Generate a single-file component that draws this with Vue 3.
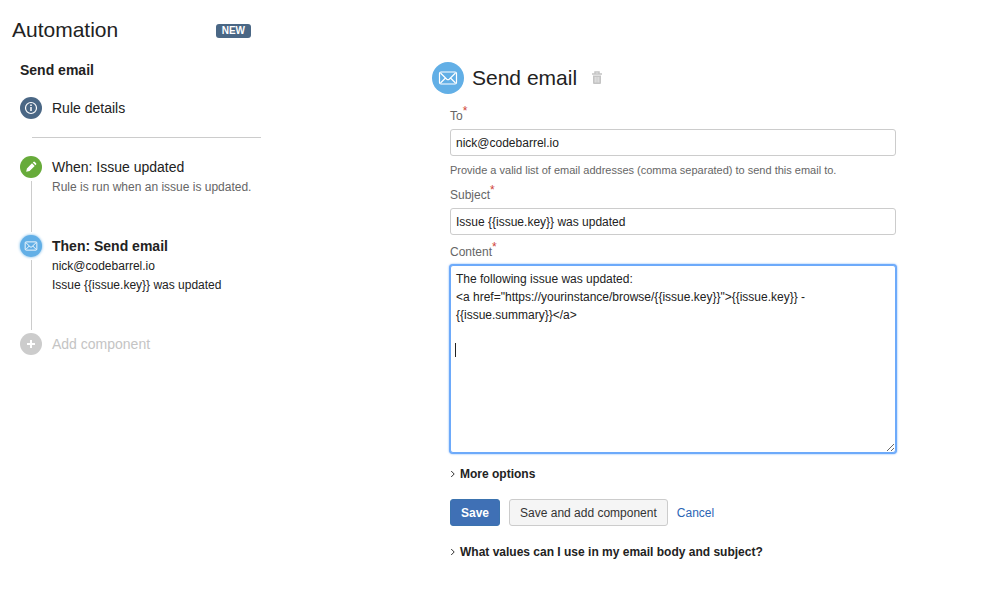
<template>
    <div class="page">
        <aside class="sidebar">
            <header class="sidebar-header">
                <h1>Automation</h1>
                <span class="badge">NEW</span>
            </header>
            <div class="rule">
                <h2>Send email</h2>
                <div class="details">
                    <span class="icon info">
                        <svg viewBox="0 0 22 22" fill="none" stroke="#fff">
                            <circle cx="11" cy="11" r="5.5" stroke-width="1.2" />
                            <path d="M11 10v4M11 7.6v1.3" stroke-width="1.5" />
                        </svg>
                    </span>
                    <span class="step-title">Rule details</span>
                </div>
                <hr />
                <ol class="steps">
                    <li v-for="step in steps" :key="step.title" class="step" :class="step.type">
                        <div class="rail">
                            <span class="icon">
                                <svg v-if="step.type === 'trigger'" viewBox="0 0 22 22" fill="#fff">
                                    <path d="M6.2 15.8l.7-3.4 5.1-5.1 2.7 2.7-5.1 5.1zM12.8 6.5l.6-.6q.7-.6 1.4 0l1.3 1.3q.6.7 0 1.4l-.6.6z" />
                                </svg>
                                <svg v-else-if="step.type === 'action'" viewBox="0 0 32 32" fill="none" stroke="#fff" stroke-width="1.3">
                                    <rect x="7.5" y="10" width="17" height="12" rx="1.5" />
                                    <path d="M8.5 11l6.3 6.2q1.2 1 2.4 0l6.3-6.2M8.5 21l5-5M23.5 21l-5-5" />
                                </svg>
                                <svg v-else viewBox="0 0 22 22" fill="none" stroke="#fff" stroke-width="2">
                                    <path d="M11 7v8M7 11h8" />
                                </svg>
                            </span>
                        </div>
                        <div class="step-body">
                            <span class="step-title">{{ step.title }}</span>
                            <p v-for="line in step.lines" :key="line">{{ line }}</p>
                        </div>
                    </li>
                </ol>
            </div>
        </aside>

        <main class="main">
            <header class="main-header">
                <span class="icon large">
                    <svg viewBox="0 0 32 32" fill="none" stroke="#fff" stroke-width="1.2">
                        <rect x="7.5" y="10" width="17" height="12" rx="1.5" />
                        <path d="M8.5 11l6.3 6.2q1.2 1 2.4 0l6.3-6.2M8.5 21l5-5M23.5 21l-5-5" />
                    </svg>
                </span>
                <h1>Send email</h1>
                <button type="button" class="trash" aria-label="Delete">
                    <svg viewBox="0 0 10 14" fill="none" stroke="#c4c4c4">
                        <path d="M0 3h10M3 2.5V1h4v1.5" stroke-width="1.5" />
                        <path d="M1 4.5h8V12q0 1-1 1H2q-1 0-1-1z" fill="#c4c4c4" stroke="none" />
                        <path d="M3.2 6v5.5M5 6v5.5M6.8 6v5.5" stroke="#fff" stroke-width=".6" />
                    </svg>
                </button>
            </header>

            <form class="form" @submit.prevent>
                <label for="to">To<sup>*</sup></label>
                <input id="to" v-model="to" type="text" />
                <p class="help">Provide a valid list of email addresses (comma separated) to send this email to.</p>

                <label for="subject">Subject<sup>*</sup></label>
                <input id="subject" v-model="subject" type="text" />

                <label for="content">Content<sup>*</sup></label>
                <div class="editor">
                    <textarea id="content" ref="contentBox" v-model="content" spellcheck="false"></textarea>
                    <span class="caret"></span>
                </div>

                <button type="button" class="expander">
                    <svg viewBox="0 0 6 8"><path d="M1.2 1l3 3-3 3" /></svg>More options
                </button>
                <div class="buttons">
                    <button type="submit" class="btn primary">Save</button>
                    <button type="button" class="btn">Save and add component</button>
                    <a href="#">Cancel</a>
                </div>
                <button type="button" class="expander">
                    <svg viewBox="0 0 6 8"><path d="M1.2 1l3 3-3 3" /></svg>What values can I use in my email body and subject?
                </button>
            </form>
        </main>
    </div>
</template>

<script setup>
import { ref, onMounted } from 'vue'

const to = ref('nick@codebarrel.io')
const subject = ref('Issue {{issue.key}} was updated')
const content = ref(
    'The following issue was updated:\n' +
    '<a href="https://yourinstance/browse/{{issue.key}}">{{issue.key}} - {{issue.summary}}</a>\n\n'
)
const contentBox = ref(null)

const steps = [
    { type: 'trigger', title: 'When: Issue updated', lines: ['Rule is run when an issue is updated.'] },
    { type: 'action', title: 'Then: Send email', lines: [to.value, subject.value] },
    { type: 'add', title: 'Add component', lines: [] }
]

onMounted(() => {
    const box = contentBox.value
    box.focus()
    box.setSelectionRange(box.value.length, box.value.length)
})
</script>

<style>
body {
    margin: 0;
    background: #fff;
}
</style>

<style scoped>
.page {
    display: flex;
    gap: 171px;
    padding: 16px 103px 16px 12px;
    color: #222;
    font-family: "Liberation Sans", Arial, sans-serif;
    font-size: 12px;
}

h1,
h2,
p {
    margin: 0;
}

h1 {
    font-size: 21px;
    line-height: 28px;
    font-weight: normal;
}

h2 {
    font-size: 14px;
    line-height: 20px;
}

.sidebar {
    flex: 0 0 249px;
}

.sidebar-header {
    display: flex;
    justify-content: space-between;
    align-items: center;
    padding-right: 10px;
}

.badge {
    margin-top: 2px;
    padding: 0 6px;
    border-radius: 3px;
    background: #4a6785;
    color: #fff;
    font-size: 10px;
    font-weight: bold;
    line-height: 14px;
}

.rule {
    padding: 16px 0 0 8px;
}

.details {
    display: flex;
    align-items: center;
    gap: 10px;
    margin-top: 17px;
}

.icon {
    display: block;
    flex: none;
    width: 22px;
    height: 22px;
    border-radius: 50%;
}

.icon svg {
    display: block;
    width: 100%;
    height: 100%;
}

.info {
    background: #4a6785;
}

.step-title {
    font-size: 14px;
    line-height: 22px;
}

hr {
    height: 1px;
    margin: 18px 0 18px 12px;
    border: 0;
    background: #ccc;
}

.steps {
    margin: 0;
    padding: 0;
    list-style: none;
}

.step {
    display: flex;
    gap: 10px;
}

.step p {
    line-height: 19px;
}

.rail {
    display: flex;
    flex-direction: column;
    align-items: center;
    gap: 3px;
}

.rail::after {
    content: "";
    flex: 1;
    width: 1px;
    margin-bottom: 3px;
    background: #ccc;
}

.trigger {
    min-height: 79px;
}

.trigger p {
    color: #666;
}

.trigger .icon {
    background: #67ab3a;
}

.action {
    min-height: 98px;
}

.action .icon {
    background: #62afe6;
    box-shadow: 0 0 3px #62afe6;
}

.action .step-title {
    font-weight: bold;
}

.add {
    color: #c4c4c4;
}

.add .icon {
    background: #ccc;
}

.add .rail::after {
    display: none;
}

.main {
    flex: 1;
    min-width: 0;
    padding-top: 46px;
}

.main-header {
    display: flex;
    align-items: center;
    gap: 8px;
}

.large {
    width: 32px;
    height: 32px;
    background: #62afe6;
}

.trash {
    margin-left: 7px;
    padding: 0;
    border: 0;
    background: none;
}

.trash svg {
    display: block;
    width: 10px;
    height: 14px;
}

.form {
    display: flex;
    flex-direction: column;
    padding: 12px 0 0 18px;
}

label {
    margin-bottom: 3px;
    color: #666;
    line-height: 20px;
}

sup {
    color: #d04437;
    font-size: 12px;
    line-height: 0;
}

input,
textarea {
    box-sizing: border-box;
    width: 100%;
    padding: 4px 5px;
    border: 1px solid #ccc;
    border-radius: 3px;
    background: #fff;
    color: #222;
    font: inherit;
    line-height: 18px;
}

input {
    height: 27px;
    margin-bottom: 7px;
}

.editor {
    position: relative;
}

textarea {
    display: block;
    height: 188px;
    resize: both;
    caret-color: transparent;
}

textarea:focus {
    border-color: #6daafa;
    outline: 0;
    box-shadow: 0 0 0 1px #6daafa, 0 0 2px 1px #6daafa;
}

.caret {
    position: absolute;
    top: 78px;
    left: 5px;
    display: none;
    width: 1px;
    height: 14px;
    background: #222;
    pointer-events: none;
}

textarea:focus + .caret {
    display: block;
}

.help {
    margin-bottom: 8px;
    color: #666;
    font-size: 11px;
    line-height: 14px;
}

.expander {
    display: flex;
    align-items: center;
    gap: 4px;
    align-self: flex-start;
    margin-top: 12px;
    padding: 0;
    border: 0;
    background: none;
    color: #222;
    font: inherit;
    font-weight: bold;
    line-height: 18px;
}

.expander svg {
    width: 6px;
    height: 8px;
    fill: none;
    stroke: #333;
}

.buttons {
    display: flex;
    align-items: center;
    gap: 9px;
    margin: 16px 0 5px;
}

.btn {
    height: 27px;
    padding: 0 10px;
    border: 1px solid #ccc;
    border-radius: 3px;
    background: #f5f5f5;
    color: #333;
    font: inherit;
}

.primary {
    border-color: #3b73af;
    background: #3f70b5;
    color: #fff;
    font-weight: bold;
}

.buttons a {
    color: #2b65b5;
    text-decoration: none;
}
</style>
